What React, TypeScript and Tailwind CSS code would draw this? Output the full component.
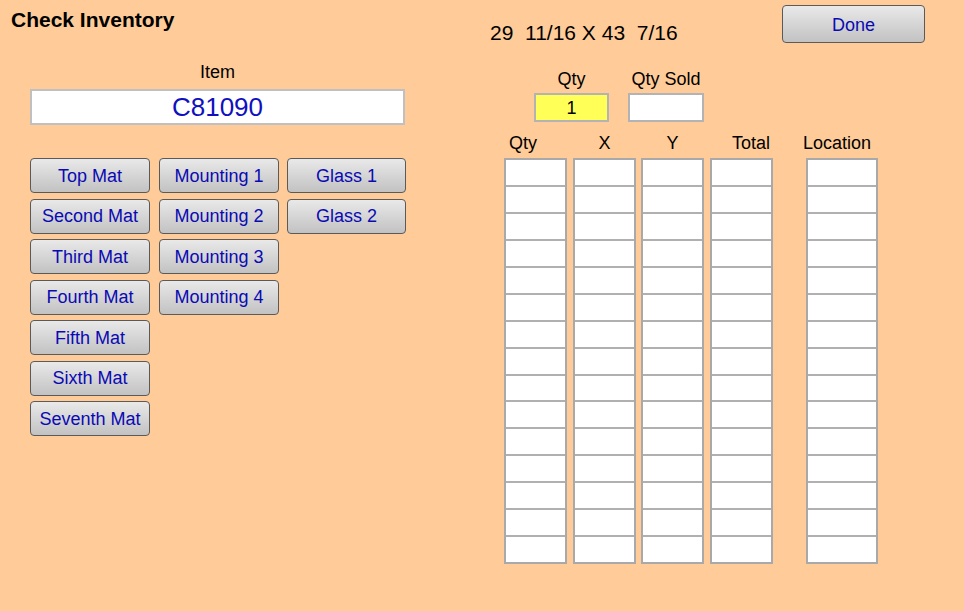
import React from "react";

const btnBase =
  "h-[35px] rounded-[4px] border-[1.5px] border-[#5a5a5a] bg-gradient-to-b from-[#e9e9e9] to-[#c2c2c2] text-[18px] leading-none text-[#0a0ab4] flex items-center justify-center";

function Btn({ label, w = "w-[120px]" }: { label: string; w?: string }) {
  return <div className={`${btnBase} ${w}`}>{label}</div>;
}

function Col({ header, width, headerCls }: { header: string; width: string; headerCls: string }) {
  const cells = Array.from({ length: 15 });
  return (
    <div className={`flex flex-col ${width}`}>
      <div className={`h-[20px] text-[18px] leading-[20px] text-black ${headerCls}`}>{header}</div>
      <div className="mt-[5px] flex h-[406px] flex-col border-2 border-[#a9a9a9] bg-white">
        {cells.map((_, i) => (
          <div
            key={i}
            className={`flex-1 ${i < 14 ? "border-b-2 border-[#b0b0b0]" : ""}`}
          />
        ))}
      </div>
    </div>
  );
}

export default function App() {
  return (
    <div className="flex h-[611px] w-[964px] bg-[#ffcc99] font-['Liberation_Sans',Arial,sans-serif] text-black">
      {/* Left pane */}
      <div className="flex w-[490px] flex-col">
        <div className="pl-[11px] pt-[8px] text-[21px] font-bold leading-[24px]">Check Inventory</div>
        <div className="ml-[30px] mt-[30px] w-[375px]">
          <div className="text-center text-[18px] leading-[20px]">Item</div>
          <div className="mt-[7px] flex h-[36px] items-center justify-center border-2 border-[#c0c0c0] bg-white text-[26px] leading-none text-[#1010c0]">
            C81090
          </div>
        </div>
        <div className="ml-[30px] mt-[33px] flex">
          <div className="flex flex-col gap-[5.5px]">
            <Btn label="Top Mat" />
            <Btn label="Second Mat" />
            <Btn label="Third Mat" />
            <Btn label="Fourth Mat" />
            <Btn label="Fifth Mat" />
            <Btn label="Sixth Mat" />
            <Btn label="Seventh Mat" />
          </div>
          <div className="ml-[9px] flex flex-col gap-[5.5px]">
            <Btn label="Mounting 1" />
            <Btn label="Mounting 2" />
            <Btn label="Mounting 3" />
            <Btn label="Mounting 4" />
          </div>
          <div className="ml-[8px] flex flex-col gap-[5.5px]">
            <Btn label="Glass 1" w="w-[119px]" />
            <Btn label="Glass 2" w="w-[119px]" />
          </div>
        </div>
      </div>

      {/* Right pane */}
      <div className="flex flex-1 flex-col">
        <div className="flex items-start justify-between pr-[39px]">
          <div className="mt-[21px] whitespace-pre text-[21px] leading-[24px]">29  11/16 X 43  7/16</div>
          <div className="mt-[5px] flex h-[38px] w-[143px] items-center justify-center rounded-[4px] border-[1.5px] border-[#5a5a5a] bg-gradient-to-b from-[#e9e9e9] to-[#c2c2c2] pt-[1px] text-[18px] leading-none text-[#0a0ab4]">
            Done
          </div>
        </div>

        <div className="ml-[44px] mt-[24px] flex gap-[19px]">
          <div className="flex w-[75px] flex-col items-center">
            <div className="text-[18px] leading-[20px]">Qty</div>
            <div className="mt-[4px] flex h-[29px] w-full items-center justify-center border-2 border-[#b3b3b3] bg-[#ffff58] text-[18px] leading-none">
              1
            </div>
          </div>
          <div className="flex w-[76px] flex-col items-center">
            <div className="whitespace-nowrap text-[18px] leading-[20px]">Qty Sold</div>
            <div className="mt-[4px] h-[29px] w-full border-2 border-[#b3b3b3] bg-white" />
          </div>
        </div>

        <div className="ml-[14px] mt-[11px] flex">
          <Col header="Qty" width="w-[63px]" headerCls="pl-[5px] text-left" />
          <div className="w-[6px]" />
          <Col header="X" width="w-[63px]" headerCls="text-center" />
          <div className="w-[5px]" />
          <Col header="Y" width="w-[63px]" headerCls="text-center" />
          <div className="w-[6px]" />
          <Col header="Total" width="w-[63px]" headerCls="text-right pr-[3px]" />
          <div className="w-[33px]" />
          <Col header="Location" width="w-[72px]" headerCls="-ml-[3px] text-left whitespace-nowrap" />
        </div>
      </div>
    </div>
  );
}
